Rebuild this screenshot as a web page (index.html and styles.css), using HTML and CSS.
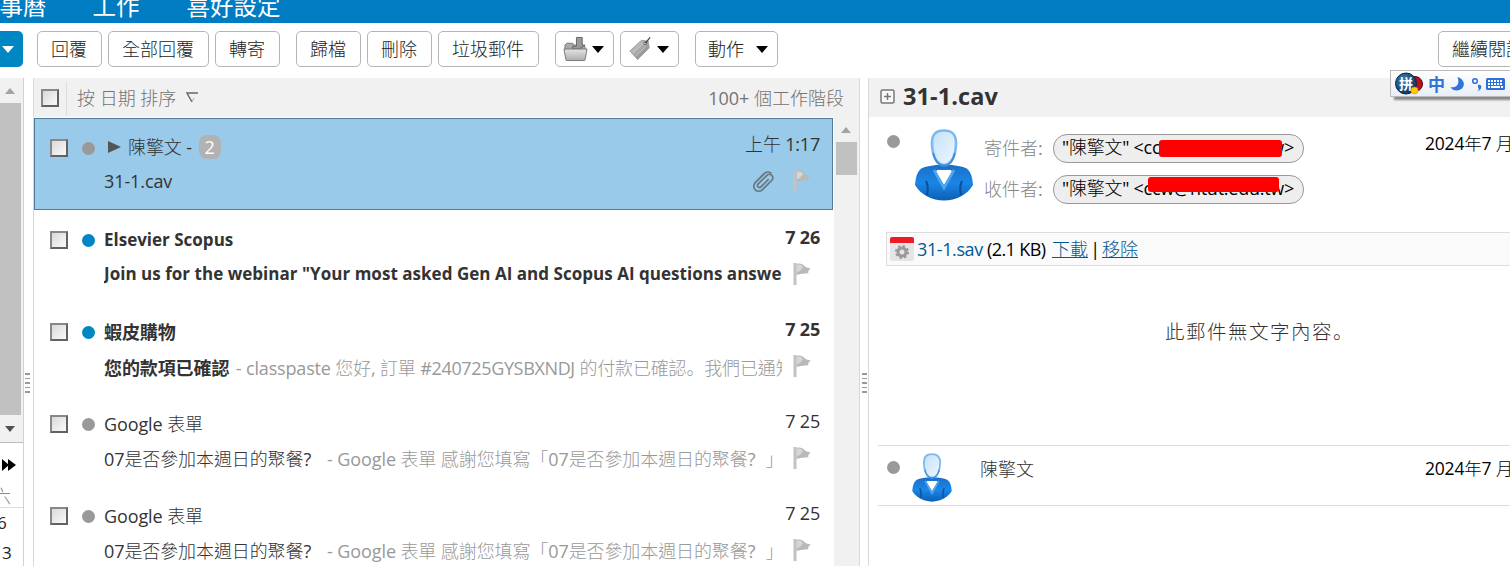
FILE: index.html
```
<!DOCTYPE html>
<html lang="zh-Hant">
<head>
<meta charset="utf-8">
<title>郵件</title>
<link rel="stylesheet" href="styles.css">
</head>
<body>
<svg width="0" height="0" class="defs">
  <defs>
    <linearGradient id="gBody" x1="0" y1="0" x2="0" y2="1"><stop offset="0" stop-color="#1b6fc8"/><stop offset=".5" stop-color="#1a86e6"/><stop offset="1" stop-color="#0d5fb5"/></linearGradient>
    <linearGradient id="gHead" x1="0" y1="0" x2="1" y2="1"><stop offset="0" stop-color="#c4e0f8"/><stop offset="1" stop-color="#eef8ff"/></linearGradient>
    <linearGradient id="gGray" x1="0" y1="0" x2="1" y2="1"><stop offset="0" stop-color="#d8d8d8"/><stop offset="1" stop-color="#777"/></linearGradient>
    <linearGradient id="gBox" x1="0" y1="0" x2="0" y2="1"><stop offset="0" stop-color="#e4e4e4"/><stop offset="1" stop-color="#adadad"/></linearGradient>
    <radialGradient id="gBall" cx=".4" cy=".35" r=".7"><stop offset="0" stop-color="#3e86bd"/><stop offset="1" stop-color="#0b2f52"/></radialGradient>
    <symbol id="person" viewBox="0 0 58 72">
      <path d="M0 56C1 44 4 39 12 37.500L21 36h16l9 1.500C54 39 57 44 58 56C52 66 41 71.500 29 71.500S6 66 0 56Z" fill="url(#gBody)"/>
      <path d="M22 41h14l1 2-8 13-8-13Z" fill="#fff"/>
      <path d="M19 41l10 18 10-18" fill="none" stroke="#4fa6ee" stroke-width="2.600"/>
      <path d="M11 52q3 6 1 14M47 52q-3 6-1 14" fill="none" stroke="#0b4f9c" stroke-width="2"/>
      <path d="M17 14C17 5 21 1.500 29 1.500S41 5 41 14c0 11-4 22-12 22S17 25 17 14Z" fill="url(#gHead)" stroke="#7cb9ef" stroke-width="2.600"/>
      <path d="M18 24c2 8 6 12.500 11 12.500S38 32 40 24" fill="none" stroke="#3f8fdb" stroke-width="1.800"/>
    </symbol>
    <symbol id="flag" viewBox="0 0 20 24">
      <path d="M1.500 1h3v22h-3Z" fill="#c2c2c2"/>
      <path d="M4.500 2c4-1 6 0 8 2 2 2 4 2 6 2-1 2-3 3-2 5-3 1-6 0-12 2Z" fill="#b9b9b9"/>
      <path d="M5 3c3-1 5 0 6 2l-3 4-3 1Z" fill="#d6d6d6"/>
    </symbol>
  </defs>
</svg>

<nav class="topbar"><span class="tab t1">行事曆</span><span class="tab t2">工作</span><span class="tab t3">喜好設定</span></nav>

<div class="toolbar">
  <div class="newbtn"><i class="tri white"></i></div>
  <div class="group"><button>回覆</button><button>全部回覆</button><button>轉寄</button></div>
  <div class="group"><button>歸檔</button><button>刪除</button><button>垃圾郵件</button></div>
  <div class="group">
    <button class="icon"><svg width="25" height="26" viewBox="0 0 26 26"><path d="M2 13V9l2-2h6l2 2h9l2 2v2" fill="#aaa" stroke="#777"/><path d="M14 1h6v8h3l-6 4h-7v-3h4Z" fill="#999" stroke="#666"/><path d="M1 13h24l-2 11q0 1-1 1H4q-1 0-1-1Z" fill="url(#gBox)" stroke="#777"/></svg><i class="tri"></i></button>
    <button class="icon"><svg width="25" height="26" viewBox="0 0 26 26"><path d="M2 15L14 4l7 1 1 7L10 24Z" fill="url(#gGray)" stroke="#999"/><path d="M5 17L16 7M8 20L19 10" stroke="#ddd" opacity=".6"/><circle cx="18" cy="7" r="1.500" fill="#fff" stroke="#555"/><path d="M18 7l5-6" stroke="#444" stroke-width="1.300"/></svg><i class="tri"></i></button>
  </div>
  <div class="group"><button class="action">動作<i class="tri"></i></button></div>
  <button class="reading">繼續閱讀</button>
</div>

<main>
  <aside>
    <div class="sidescroll"><i class="arrow up"></i><div class="thumb"></div><i class="arrow down"></i></div>
    <div class="calendar"><svg class="ff" width="14" height="12" viewBox="0 0 14 12"><path d="M0 0l7 6-7 6ZM6 0l8 6-8 6Z" fill="#000"/></svg><div class="day">六</div><div class="num">6</div><div class="num n2">3</div></div>
  </aside>
  <div class="sash"><i></i><i></i><i></i><i></i><i></i></div>

  <section class="list">
    <header><span class="check"></span><span class="divider"></span><span class="sort">按 日期 排序</span><svg width="13" height="12" viewBox="0 0 13 12"><path d="M12 1H1l5 9" fill="none" stroke="#666" stroke-width="1.400"/><path d="M6 10l2-4" stroke="#aaa"/></svg><span class="count">100+ 個工作階段</span></header>
    <div class="listbody">
      <div class="rows">
        <article class="selected"><span class="check"></span><i class="dot"></i><div class="info">
          <div class="line"><span class="from"><i class="play"></i>陳擎文 - <b class="badge">2</b></span><time>上午 1:17</time></div>
          <div class="line second"><span class="text">31-1.cav</span><svg class="clip" width="24" height="24" viewBox="0 0 24 24"><g transform="translate(0 1) rotate(45 12 12)" fill="none" stroke="#667783" stroke-width="1.700"><path d="M7 6v12a5 5 0 0 0 10 0V4.500a3.500 3.500 0 0 0-7 0V17a2 2 0 0 0 4 0V6"/><path d="M7 7V4.500a5 5 0 0 1 5-4.500"/></g></svg><svg class="flag"><use href="#flag"/></svg></div></div></article>
        <article class="unread"><span class="check"></span><i class="dot"></i><div class="info">
          <div class="line"><span class="from scopus">Elsevier Scopus</span><time>7 26</time></div>
          <div class="line second"><span class="text webinar">Join us for the webinar "Your most asked Gen AI and Scopus AI questions answe</span><svg class="flag"><use href="#flag"/></svg></div></div></article>
        <article class="unread"><span class="check"></span><i class="dot"></i><div class="info">
          <div class="line"><span class="from">蝦皮購物</span><time>7 25</time></div>
          <div class="line second"><span class="text">您的款項已確認<em class="preview"> - classpaste 您好, 訂單 <span class="order">#240725GYSBXNDJ</span> 的付款已確認<span lang="ja" class="stop">。</span>我們已通知</em></span><svg class="flag"><use href="#flag"/></svg></div></div></article>
        <article><span class="check"></span><i class="dot"></i><div class="info">
          <div class="line"><span class="from">Google 表單</span><time>7 25</time></div>
          <div class="line second"><span class="text">07是否參加本週日的聚餐?<em class="gap">- Google 表單 感謝您填寫「07是否參加本週日的聚餐<span class="mark">?</span>」</em></span><svg class="flag"><use href="#flag"/></svg></div></div></article>
        <article><span class="check"></span><i class="dot"></i><div class="info">
          <div class="line"><span class="from">Google 表單</span><time>7 25</time></div>
          <div class="line second"><span class="text">07是否參加本週日的聚餐?<em class="gap">- Google 表單 感謝您填寫「07是否參加本週日的聚餐<span class="mark">?</span>」</em></span><svg class="flag"><use href="#flag"/></svg></div></div></article>
      </div>
      <div class="scroll"><i class="arrow up"></i><div class="thumb"></div></div>
    </div>
  </section>
  <div class="sash right"><i></i><i></i><i></i><i></i><i></i></div>

  <section class="reader">
    <header><svg width="15" height="15" viewBox="0 0 15 15"><rect x="1" y="1" width="13" height="13" rx="1.500" fill="#f8f8f8" stroke="#777" stroke-width="1.500"/><path d="M4 7.500h7M7.500 4v7" stroke="#777" stroke-width="1.500"/></svg><h1>31-1.cav</h1></header>
    <div class="message">
      <i class="dot"></i><svg class="avatar" width="58" height="72"><use href="#person"/></svg>
      <div class="people">
        <div class="person"><span>寄件者:</span><div class="pill">"陳擎文" &lt;ccw@ntut.edu.tw&gt;<i class="redact r1"></i></div></div>
        <div class="person"><span>收件者:</span><div class="pill">"陳擎文" &lt;ccw@ntut.edu.tw&gt;<i class="redact r2"></i></div></div>
      </div>
      <div class="date">2024年7 月</div>
    </div>
    <div class="attachment"><svg width="24" height="24" viewBox="0 0 24 24"><rect width="24" height="24" rx="2" fill="#e5e5e5"/><path d="M0 6V2q0-2 2-2h20q2 0 2 2v4Z" fill="#ed1c24"/><circle cx="12" cy="15" r="4" fill="none" stroke="#999" stroke-width="3"/><circle cx="12" cy="15" r="6" fill="none" stroke="#999" stroke-width="2" stroke-dasharray="2.400 2.310"/></svg><span class="file">31-1.sav</span><span class="size">(2.1 KB)</span><a>下載</a><span class="bar">|</span><a>移除</a></div>
    <div class="empty">此郵件無文字內容<span lang="ja" class="stop">。</span></div>
    <div class="collapsed"><i class="dot"></i><svg class="avatar" width="40" height="49"><use href="#person"/></svg><span class="name">陳擎文</span><div class="date">2024年7 月</div></div>
  </section>
</main>

<div class="ime">
  <svg width="28" height="24" viewBox="0 0 28 24"><circle cx="20" cy="12" r="7.500" fill="#b9101c" stroke="#4b0a10"/><circle cx="11" cy="11.500" r="10.500" fill="url(#gBall)" stroke="#0c2540"/><text x="11" y="16.500" text-anchor="middle" class="pin">拼</text><circle cx="19.500" cy="18.500" r="3.600" fill="#ffc90e" stroke="#d08a00" stroke-width=".5"/></svg>
  <span class="zh">中</span>
  <svg width="16" height="16" viewBox="0 0 16 16"><path d="M8.500 1c6 2 8 7 5 11-3 3.500-10 3.500-12-1 5 1 10-2 7-10Z" fill="#2f73dc"/></svg>
  <svg class="punct" width="12" height="16" viewBox="0 0 12 16"><circle cx="4" cy="5" r="2.300" fill="none" stroke="#2f73dc" stroke-width="1.600"/><path d="M7 9c4-1.500 5 4-.5 6.500 1.500-2 1.500-3 .5-4Z" fill="#2f73dc"/></svg>
  <svg width="19" height="12" viewBox="0 0 19 12"><rect width="19" height="12" rx="1.500" fill="#2f6fd8"/><path d="M2 3h15M2 6h15" stroke="#fff" stroke-width="2" stroke-dasharray="2 1"/><path d="M2 9h2M5 9h9M15 9h2" stroke="#fff" stroke-width="2"/></svg>
</div>
</body>
</html>
```
FILE: styles.css
```
* { box-sizing: border-box; }
html, body { margin: 0; height: 566px; overflow: hidden; }
body { display: flex; flex-direction: column; width: 1510px; background: #fff; color: #333; font: 400 17.500px/24px "Open Sans", "Noto Sans CJK TC Light", "Noto Sans CJK TC", sans-serif; white-space: nowrap; position: relative; }
i, em { font-style: normal; }
svg { display: block; flex: none; }
.defs { position: absolute; }

.topbar { flex: none; height: 23px; background: #007cc3; color: #fff; display: flex; overflow: hidden; font: 400 23.500px/24px "Noto Sans CJK TC", sans-serif; align-items: flex-start; }
.tab { margin-top: -7px; }
.t1 { margin-left: -24px; }
.t2 { margin-left: 46px; }
.t3 { margin-left: 47px; }

.toolbar { flex: none; height: 55px; display: flex; align-items: flex-start; padding-top: 8px; overflow: hidden; font-size: 18px; }
.newbtn { flex: none; width: 23px; height: 36px; margin-right: 14px; background: #0087c3; border-radius: 0 5px 5px 0; display: flex; align-items: center; padding-left: 2px; }
.group { display: flex; gap: 6px; margin-right: 16px; flex: none; }
button { height: 36px; flex: none; margin: 0; padding: 0 14px 0 13px; font: inherit; color: #222; background: #fff; border: 1px solid #b5b5b5; border-radius: 5px; display: flex; align-items: center; }
.group button.icon { width: 59px; padding: 0 0 0 7px; gap: 4px; }
.group button.action { width: 83px; gap: 12px; padding: 0 0 0 12px; }
button.reading { margin-left: 644px; width: 120px; }
.tri { width: 0; height: 0; border: 6px solid transparent; border-top: 7px solid #000; border-bottom: 0; flex: none; }
.tri.white { border-top-color: #fff; }

main { flex: 1; min-height: 0; display: flex; }
aside { width: 24px; flex: none; border-right: 1px solid #d2d2d2; overflow: hidden; }
.sidescroll { height: 365px; background: #f1f1f1; border-bottom: 1px solid #bbb; display: flex; flex-direction: column; padding-top: 10px; }
.arrow { display: block; width: 0; height: 0; border: 5.500px solid transparent; flex: none; }
.arrow.up { border-top: 0; border-bottom: 6px solid #a3a3a3; margin-left: 5px; }
.arrow.down { border-bottom: 0; border-top: 6px solid #505050; margin-left: 5px; }
.sidescroll .thumb { width: 21px; height: 312px; margin: 9px 0 11px; background: #c1c1c1; }
.calendar { padding-top: 16px; }
.ff { margin-left: 2px; }
.day { color: #888; margin: 13px 0 0 -7px; height: 24px; font-size: 18px; border-bottom: 1px solid #ddd; width: 30px; }
.num { font-size: 17px; margin: 3px 0 0 -3px; height: 24px; color: #222; }
.num.n2 { margin: 6px 0 0 2px; }
.sash { width: 10px; flex: none; border-right: 1px solid #d8d8d8; padding: 295px 0 0 1px; display: flex; flex-direction: column; gap: 3px; }
.sash i { width: 5px; height: 1.500px; background: #999; }
.sash.right { border-left: 1px solid #d8d8d8; padding-left: 2px; }

.list { width: 825px; flex: none; display: flex; flex-direction: column; }
.list header { height: 39px; flex: none; background: #f1f1f1; display: flex; align-items: center; padding: 1px 15px 0 7px; color: #737373; font-size: 18px; }
.count { margin-left: auto; }
.check { width: 18px; height: 18px; flex: none; border: 2px solid #777; border-color: #888 #626262 #626262 #888; background: linear-gradient(135deg, #d9d9d9, #fafafa); }
.divider { width: 1px; height: 33px; background: #ddd; margin: 0 10px 0 7px; }
.sort { margin-right: 10px; }
.listbody { display: flex; flex: 1; min-height: 0; padding-top: 1px; }
.rows { width: 799px; overflow: hidden; flex: none; }
.scroll { width: 25px; margin: -1px 0 0 1px; background: #f1f1f1; padding-top: 10px; flex: none; }
.scroll .arrow.up { margin-left: 7px; }
.scroll .thumb { width: 21px; height: 33px; background: #c1c1c1; margin: 9px 0 0 2px; }
article { height: 92px; display: flex; padding: 21px 13px 0 16px; font-size: 18px; }
article.selected { background: #99cae9; border: 1px solid #4f7d99; padding: 20px 12px 0 15px; }
.dot { width: 13px; height: 13px; border-radius: 50%; background: #999; flex: none; }
article .dot { margin: 3px 9px 0 14px; }
.unread .dot { background: #0087c3; }
.info { flex: 1; min-width: 0; margin-top: -3px; }
.selected .info { margin-top: -4px; }
.line { height: 24px; display: flex; justify-content: space-between; letter-spacing: -.1px; }
.line time { margin-top: -3px; letter-spacing: -.2px; }
.from { display: flex; align-items: center; white-space: pre; }
.play { border: 6px solid transparent; border-left: 13px solid #555; border-right: 0; margin: 0 7px 0 4px; }
.badge { width: 22px; height: 24px; border-radius: 8px; background: #b2b2b2; color: #fff; font-weight: 400; text-align: center; margin-left: 2px; }
.second { margin-top: 11px; align-items: center; }
.selected .second { margin-top: 10px; }
.text { width: 678px; overflow: hidden; white-space: pre; }
.text em { color: #999; font-weight: 400; }
.gap { margin-left: 16px; }
.mark { display: inline-block; width: 18px; }
.selected .text { width: auto; margin-right: auto; }
.clip { margin-right: 17px; }
.flag { width: 20px; height: 24px; margin: -2px 8px 0 0; }
.selected .flag { margin-top: 0; }
.unread { font-weight: 700; }
.unread .line { font-family: "Open Sans", "Noto Sans CJK TC", sans-serif; }
.unread em { font-family: "Open Sans", "Noto Sans CJK TC Light", "Noto Sans CJK TC", sans-serif; }
.line .scopus { font-size: 17px; letter-spacing: 0; }
.line .webinar { font-size: 17px; letter-spacing: .028px; margin-top: -2px; }
.text .preview { margin-left: 2px; letter-spacing: -.16px; }
.order { letter-spacing: -.35px; }
.stop { font-family: "Noto Sans CJK JP", sans-serif; font-weight: 300; }

.reader { flex: 1; min-width: 0; overflow: hidden; }
.reader header { height: 39px; background: #f1f1f1; display: flex; align-items: center; padding: 0 0 3px 11px; gap: 8px; }
h1 { font-size: 23.500px; line-height: 30px; margin: 0; font-weight: 700; letter-spacing: .1px; }
.message { height: 115px; display: flex; padding: 12px 0 0 18px; color: #000; }
.message > .dot { margin-top: 6px; }
.message .avatar { margin-left: 15px; }
.people { margin: 5px 0 0 11px; display: flex; flex-direction: column; gap: 12px; width: 441px; flex: none; }
.person { display: flex; height: 29px; align-items: center; font-size: 18px; }
.person > span { width: 69px; color: #888; margin-top: -2px; }
.pill { position: relative; height: 29px; width: 251px; border: 1px solid #999; border-radius: 14px; background: #eee; padding: 0 8px; line-height: 25px; letter-spacing: -.25px; }
.redact { position: absolute; background: #f00; border-radius: 3px; }
.r1 { left: 105px; top: 5px; width: 123px; height: 17px; }
.r2 { left: 94px; top: 1px; width: 131px; height: 15px; }
.date { color: #000; margin-top: 2px; letter-spacing: -.2px; }
.attachment { height: 34px; margin: 0 0 0 17px; background: #fafafa; border: 1px solid #ddd; border-right: 0; display: flex; align-items: center; padding: 0 0 1px 3px; color: #000; font-size: 18px; letter-spacing: -.4px; }
.attachment .file { margin-left: 3px; width: 70px; color: #005a95; }
.attachment .size { width: 65px; letter-spacing: -.6px; }
.attachment a { color: #005a95; text-decoration: underline; letter-spacing: 0; }
.bar { width: 14px; text-align: center; }
.empty { margin: 53px 0 0 296px; height: 126px; font-size: 19.500px; letter-spacing: 1.500px; color: #333; }
.collapsed { height: 61px; margin-left: 9px; border: 1px solid #ddd; border-width: 1px 0; display: flex; padding: 7px 0 0 9px; }
.collapsed .dot { margin-top: 8px; }
.collapsed .avatar { margin-left: 12px; }
.collapsed .name { width: 445px; flex: none; margin: 4px 0 0 28px; font-size: 18px; }
.collapsed .date { margin-top: 3px; }

.ime { position: absolute; left: 1390px; top: 70px; width: 124px; height: 27px; background: linear-gradient(#fff, #e9edf6); border: 1px solid #bbb; box-shadow: 4px 3px 2px #888; display: flex; align-items: center; padding-left: 4px; }
.ime .zh { font: 700 17px/20px "Noto Sans CJK TC", sans-serif; color: #2f73dc; margin: 0 4px 0 5px; }
.ime .punct { margin: 0 3px 0 6px; }
.pin { font: 700 14px "Noto Sans CJK SC", sans-serif; fill: #fff; }
```
